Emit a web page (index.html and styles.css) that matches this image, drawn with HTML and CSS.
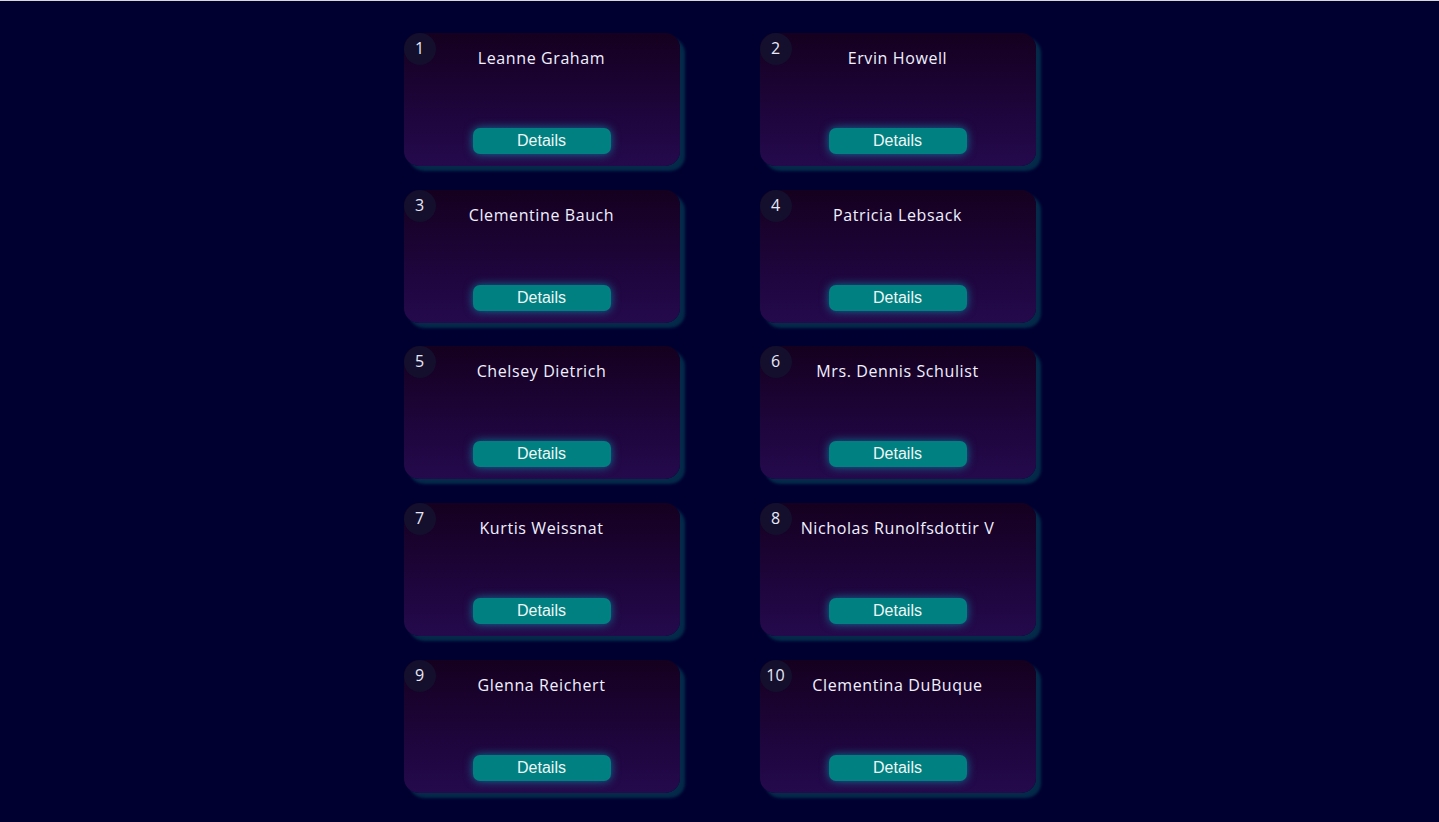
FILE: index.html
```html
<!DOCTYPE html>
<html>
<head>
<meta charset="utf-8">
<link rel="stylesheet" href="styles.css">
</head>
<body>
<main class="grid">
  <div class="card"><span class="badge">1</span><h2 class="name">Leanne Graham</h2><button class="btn">Details</button></div>
  <div class="card"><span class="badge">2</span><h2 class="name">Ervin Howell</h2><button class="btn">Details</button></div>
  <div class="card"><span class="badge">3</span><h2 class="name">Clementine Bauch</h2><button class="btn">Details</button></div>
  <div class="card"><span class="badge">4</span><h2 class="name">Patricia Lebsack</h2><button class="btn">Details</button></div>
  <div class="card"><span class="badge">5</span><h2 class="name">Chelsey Dietrich</h2><button class="btn">Details</button></div>
  <div class="card"><span class="badge">6</span><h2 class="name">Mrs. Dennis Schulist</h2><button class="btn">Details</button></div>
  <div class="card"><span class="badge">7</span><h2 class="name">Kurtis Weissnat</h2><button class="btn">Details</button></div>
  <div class="card"><span class="badge">8</span><h2 class="name">Nicholas Runolfsdottir V</h2><button class="btn">Details</button></div>
  <div class="card"><span class="badge">9</span><h2 class="name">Glenna Reichert</h2><button class="btn">Details</button></div>
  <div class="card"><span class="badge">10</span><h2 class="name">Clementina DuBuque</h2><button class="btn">Details</button></div>
</main>
</body>
</html>
```
FILE: styles.css
```css
html, body {
  margin: 0;
  padding: 0;
  height: 100%;
}
body {
  background: #000030;
  border-top: 1px solid #d8d8d8;
  box-sizing: border-box;
  font-family: "Open Sans", "DejaVu Sans", sans-serif;
}
.grid {
  display: grid;
  grid-template-columns: 276px 276px;
  column-gap: 80px;
  row-gap: 23.7px;
  justify-content: center;
  padding-top: 32px;
}
.card {
  position: relative;
  height: 133px;
  box-sizing: border-box;
  border-radius: 15px;
  background: linear-gradient(180deg, #15001f 0%, #1e053c 60%, #240a4c 100%);
  box-shadow: 5px 5px 3px rgba(5, 60, 85, 0.7);
  display: flex;
  flex-direction: column;
  align-items: center;
  justify-content: space-between;
  padding: 13px 0 12px;
}
.badge {
  position: absolute;
  left: 0;
  top: 0;
  width: 32px;
  height: 32px;
  border-radius: 50%;
  background: #130f2c;
  color: #e8e8f8;
  font-size: 16px;
  line-height: 30px;
  text-align: center;
}
.name {
  margin: 0;
  font-size: 16px;
  font-weight: 400;
  line-height: 24px;
  color: #f0f0ff;
  letter-spacing: 0.6px;
}
.btn {
  width: 138px;
  height: 26px;
  border: none;
  border-radius: 7px;
  background: #008080;
  color: #eef6f6;
  font-family: "Liberation Sans", Arial, sans-serif;
  font-size: 16px;
  padding: 0;
  box-shadow: 0 0 10px rgba(0, 200, 210, 0.55);
}
```
